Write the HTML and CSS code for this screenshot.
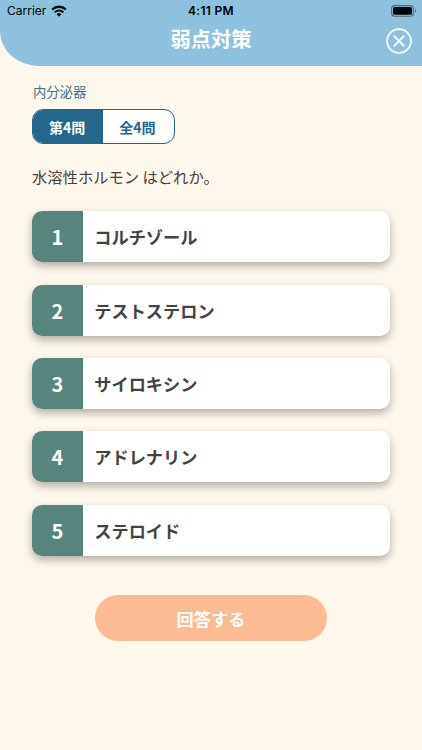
FILE: index.html
```
<!DOCTYPE html>
<html lang="ja">
<head>
  <meta charset="UTF-8">
  <meta name="viewport" content="width=device-width, initial-scale=1.0">
  <title>弱点対策</title>
  <link rel="stylesheet" href="styles.css">
</head>
<body>
  <header class="header">
    <div class="status-bar">
      <div class="carrier">
        <span>Carrier</span>
        <svg class="wifi" width="16" height="12" viewBox="0 0 16 12">
          <path d="M1.2 4.5 A9.8 9.8 0 0 1 14.8 4.5" fill="none" stroke="#000" stroke-width="2.3"/>
          <path d="M3.7 7.2 A6.2 6.2 0 0 1 12.3 7.2" fill="none" stroke="#000" stroke-width="2"/>
          <path d="M8 11.7 L5.6 9.2 A3.5 3.5 0 0 1 10.4 9.2 Z" fill="#000"/>
        </svg>
      </div>
      <span class="time">4:11 PM</span>
      <svg class="battery" width="26" height="12" viewBox="0 0 26 12">
        <rect x="0.6" y="0.6" width="21.8" height="10.6" rx="3" fill="none" stroke="#000" stroke-opacity="0.45" stroke-width="1.1"/>
        <rect x="2" y="2" width="19" height="7.8" rx="1.6" fill="#000"/>
        <path d="M23.9 4 A2.2 2.2 0 0 1 23.9 7.8 Z" fill="#000" fill-opacity="0.5"/>
      </svg>
    </div>
    <div class="title-bar">
      <h1>弱点対策</h1>
      <button class="close" aria-label="閉じる">
        <svg width="26" height="26" viewBox="0 0 26 26" fill="none" stroke="#fff">
          <circle cx="13" cy="13" r="11.9" stroke-width="1.7"/>
          <path d="M8.2 8.2 L17.8 17.8 M17.8 8.2 L8.2 17.8" stroke-width="1.8" stroke-linecap="round"/>
        </svg>
      </button>
    </div>
  </header>

  <main>
    <p class="category">内分泌器</p>
    <div class="progress">
      <span class="current">第4問</span>
      <span class="total">全4問</span>
    </div>
    <p class="question">水溶性ホルモン はどれか。</p>

    <ul class="choices">
      <li><span class="number">1</span><span class="text">コルチゾール</span></li>
      <li><span class="number">2</span><span class="text">テストステロン</span></li>
      <li><span class="number">3</span><span class="text">サイロキシン</span></li>
      <li><span class="number">4</span><span class="text">アドレナリン</span></li>
      <li><span class="number">5</span><span class="text">ステロイド</span></li>
    </ul>

    <button class="answer">回答する</button>
  </main>
</body>
</html>
```

FILE: styles.css
```
* {
  box-sizing: border-box;
}

body {
  margin: 0;
  min-height: 100vh;
  background-color: #fef7eb;
  color: #434343;
  font-family: "Noto Sans CJK JP", sans-serif;
}

h1,
p,
ul {
  margin: 0;
  padding: 0;
}

button {
  border: none;
  padding: 0;
  font-family: inherit;
  cursor: pointer;
}

.header {
  height: 65.6px;
  background-color: #8dc1de;
  border-bottom-left-radius: 39px 35px;
}

.status-bar {
  display: grid;
  grid-template-columns: 1fr auto 1fr;
  align-items: center;
  height: 21px;
  padding: 0 5px 0 7px;
  color: #000;
  font-family: Inter, sans-serif;
  font-size: 12px;
}

.carrier {
  display: flex;
  align-items: center;
  gap: 5px;
}

.time {
  margin-left: -2px;
  font-weight: 600;
  letter-spacing: 0.3px;
}

.battery {
  justify-self: end;
}

.title-bar {
  display: grid;
  grid-template-columns: 1fr auto 1fr;
  align-items: center;
  height: 34px;
  padding: 0 10px;
}

.title-bar h1 {
  grid-column: 2;
  color: #fff;
  font-size: 20.3px;
  font-weight: 700;
  line-height: 34px;
}

.close {
  justify-self: end;
  height: 26px;
  margin-top: 6px;
  background: none;
}

.close svg {
  display: block;
}

main {
  padding: 16.4px 32px 0;
}

.category {
  padding-left: 1px;
  color: #397393;
  font-size: 13.3px;
  line-height: 20px;
}

.progress {
  display: flex;
  width: 142.5px;
  height: 35.5px;
  margin-top: 7px;
  border: 1.3px solid #23678c;
  border-radius: 11px;
  overflow: hidden;
  background-color: #fff;
  font-size: 14px;
  font-weight: 700;
  line-height: 34px;
  text-align: center;
}

.progress span {
  flex: 1;
  padding-right: 2px;
}

.current {
  background-color: #23678c;
  color: #fff;
}

.total {
  color: #23678c;
}

.question {
  margin-top: 20px;
  font-size: 15.3px;
  line-height: 24px;
}

.choices {
  display: flex;
  flex-direction: column;
  gap: 22.35px;
  margin-top: 22.8px;
  list-style: none;
}

.choices li {
  display: flex;
  height: 51px;
  border-radius: 10px;
  background-color: #fff;
  box-shadow: 0 4px 8px rgba(0, 0, 0, 0.3);
  font-weight: 700;
  line-height: 51px;
}

.number {
  width: 51px;
  border-radius: 10px 0 0 10px;
  background-color: #56857e;
  color: #fff;
  font-size: 20px;
  text-align: center;
}

.text {
  padding-left: 11.3px;
  font-size: 17.2px;
}

.answer {
  display: block;
  width: 232px;
  height: 46px;
  margin: 39.6px auto 0;
  border-radius: 23px;
  background-color: #fdbb94;
  color: #fff;
  font-size: 17.2px;
  font-weight: 700;
}
```
